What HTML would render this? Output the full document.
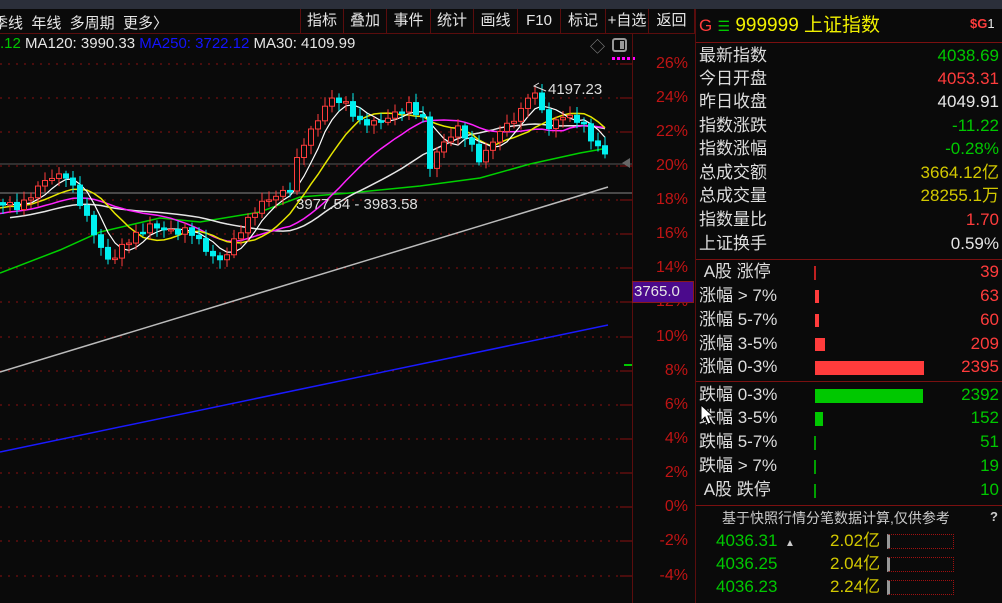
<!DOCTYPE html>
<html><head><meta charset="utf-8"><style>
*{margin:0;padding:0;box-sizing:border-box}
body{width:1002px;height:603px;background:#0a0a0a;overflow:hidden;position:relative;font-family:"Liberation Sans","Noto Sans CJK SC",sans-serif;color:#ddd}
.a{position:absolute;white-space:nowrap}
.tb{position:absolute;top:9px;height:25px;border-left:1px solid #5a0d0d;font-size:15px;color:#e6e6e6;text-align:center;line-height:24px}
.r{position:absolute;left:699px;width:300px;font-size:17px;height:23px;line-height:23px}
.r .l{position:absolute;left:0;color:#ddd}
.r .v{position:absolute;right:0}
.g{color:#00c800}.rd{color:#ff3c3c}.y{color:#d2c800}.w{color:#e6e6e6}
.pct{position:absolute;left:636px;width:52px;text-align:right;font-size:16px;color:#c01414}
.q{line-height:20px;height:20px;font-size:17px}
</style></head><body>
<div class="a" style="left:0;top:0;width:1002px;height:9px;background:#2b2f3a"></div>
<div class="a" style="left:0;top:33px;width:696px;height:1px;background:#5a0d0d"></div>
<div class="a" style="left:-7px;top:12px;font-size:15px;color:#e6e6e6">季线&nbsp;&nbsp;年线&nbsp;&nbsp;多周期&nbsp;&nbsp;更多〉</div>
<div class="tb" style="left:300px;width:43px">指标</div>
<div class="tb" style="left:343px;width:43px">叠加</div>
<div class="tb" style="left:386px;width:44px">事件</div>
<div class="tb" style="left:430px;width:43px">统计</div>
<div class="tb" style="left:473px;width:44px">画线</div>
<div class="tb" style="left:517px;width:43px">F10</div>
<div class="tb" style="left:560px;width:45px">标记</div>
<div class="tb" style="left:605px;width:43px">+自选</div>
<div class="tb" style="left:648px;width:47px;border-right:1px solid #5a0d0d">返回</div>
<div class="a" style="left:0;top:35px;font-size:15px;color:#e6e6e6"><span class="g">.12</span> MA120: 3990.33 <span style="color:#1414ff">MA250: 3722.12</span> MA30: 4109.99</div>
<div class="a" style="left:590px;top:36px;font-size:15px;color:#888">◇</div>
<div class="a" style="left:612px;top:38px;width:15px;height:14px;border:2px solid #999;border-radius:3px"><div style="position:absolute;right:1px;top:1px;width:4px;height:8px;background:#999"></div></div>
<div class="a" style="left:612px;top:57px;width:24px;height:3px;background:repeating-linear-gradient(90deg,#f0f 0 3px,transparent 3px 5px)"></div>
<div class="a" style="left:632px;top:34px;width:1px;height:569px;background:#5a0d0d"></div>
<div class="a" style="left:695px;top:9px;width:1px;height:594px;background:#5a0d0d"></div>
<div class="pct" style="top:55px">26%</div><div class="pct" style="top:89px">24%</div><div class="pct" style="top:123px">22%</div><div class="pct" style="top:157px">20%</div><div class="pct" style="top:191px">18%</div><div class="pct" style="top:225px">16%</div><div class="pct" style="top:259px">14%</div><div class="pct" style="top:293px">12%</div><div class="pct" style="top:328px">10%</div><div class="pct" style="top:362px">8%</div><div class="pct" style="top:396px">6%</div><div class="pct" style="top:430px">4%</div><div class="pct" style="top:464px">2%</div><div class="pct" style="top:498px">0%</div><div class="pct" style="top:532px">-2%</div><div class="pct" style="top:567px">-4%</div>
<div class="a" style="left:632px;top:281px;width:62px;height:22px;background:#4b0a8c;border:1px solid #8a1a1a;color:#e6e6e6;font-size:15px;line-height:20px;padding-left:1px">3765.0</div>
<svg class="a" style="left:0;top:34px" width="640" height="569" id="s"></svg>
<div class="a" style="left:548px;top:81px;font-size:15px;color:#ddd">4197.23</div>
<div class="a" style="left:296px;top:196px;font-size:15px;color:#ddd">3977.54 - 3983.58</div>
<div class="a" style="left:699px;top:10px;font-size:19px"><span class="rd" style="font-size:17px">G</span> <span class="g" style="font-size:14px">☰</span> <span style="color:#f0f000">999999 上证指数</span></div>
<div class="a" style="left:970px;top:16px;font-size:13px"><span class="rd" style="font-weight:bold">$G</span><span class="w">1</span></div>
<div class="a" style="left:696px;top:42px;width:306px;height:1px;background:#7a1010"></div>
<div class="r" style="top:44px"><span class="l">最新指数</span><span class="v g">4038.69</span></div>
<div class="r" style="top:67px"><span class="l">今日开盘</span><span class="v rd">4053.31</span></div>
<div class="r" style="top:90px"><span class="l">昨日收盘</span><span class="v w">4049.91</span></div>
<div class="r" style="top:114px"><span class="l">指数涨跌</span><span class="v g">-11.22</span></div>
<div class="r" style="top:137px"><span class="l">指数涨幅</span><span class="v g">-0.28%</span></div>
<div class="r" style="top:161px"><span class="l">总成交额</span><span class="v y">3664.12亿</span></div>
<div class="r" style="top:184px"><span class="l">总成交量</span><span class="v y">28255.1万</span></div>
<div class="r" style="top:208px"><span class="l">指数量比</span><span class="v rd">1.70</span></div>
<div class="r" style="top:232px"><span class="l">上证换手</span><span class="v w">0.59%</span></div>
<div class="a" style="left:696px;top:259px;width:306px;height:1px;background:#7a1010"></div>
<div class="r" style="top:260px"><span class="l">&nbsp;A股 涨停</span><span class="v rd">39</span></div>
<div class="r" style="top:284px"><span class="l">涨幅 &gt; 7%</span><span class="v rd">63</span></div>
<div class="r" style="top:308px"><span class="l">涨幅 5-7%</span><span class="v rd">60</span></div>
<div class="r" style="top:332px"><span class="l">涨幅 3-5%</span><span class="v rd">209</span></div>
<div class="r" style="top:355px"><span class="l">涨幅 0-3%</span><span class="v rd">2395</span></div>
<div class="a" style="left:814px;top:266px;width:2px;height:14px;background:#c02020"></div>
<div class="a" style="left:815px;top:290px;width:4px;height:13px;background:#ff3c3c"></div>
<div class="a" style="left:815px;top:314px;width:4px;height:13px;background:#ff3c3c"></div>
<div class="a" style="left:815px;top:338px;width:10px;height:13px;background:#ff3c3c"></div>
<div class="a" style="left:815px;top:361px;width:109px;height:14px;background:#ff3c3c"></div>
<div class="a" style="left:696px;top:381px;width:306px;height:1px;background:#7a1010"></div>
<div class="r" style="top:383px"><span class="l">跌幅 0-3%</span><span class="v g">2392</span></div>
<div class="r" style="top:406px"><span class="l">跌幅 3-5%</span><span class="v g">152</span></div>
<div class="r" style="top:430px"><span class="l">跌幅 5-7%</span><span class="v g">51</span></div>
<div class="r" style="top:454px"><span class="l">跌幅 &gt; 7%</span><span class="v g">19</span></div>
<div class="r" style="top:478px"><span class="l">&nbsp;A股 跌停</span><span class="v g">10</span></div>
<div class="a" style="left:815px;top:389px;width:108px;height:14px;background:#00c800"></div>
<div class="a" style="left:815px;top:412px;width:8px;height:14px;background:#00c800"></div>
<div class="a" style="left:814px;top:436px;width:2px;height:14px;background:#00a000"></div>
<div class="a" style="left:814px;top:460px;width:2px;height:14px;background:#00a000"></div>
<div class="a" style="left:814px;top:484px;width:2px;height:14px;background:#00a000"></div>
<div class="a" style="left:696px;top:505px;width:306px;height:1px;background:#7a1010"></div>
<div class="a" style="left:722px;top:508px;font-size:14px;color:#ccc">基于快照行情分笔数据计算,仅供参考</div>
<div class="a" style="left:990px;top:509px;font-size:13px;color:#ccc;font-weight:bold">?</div>
<div class="a g q" style="left:716px;top:531px">4036.31 <span style="color:#ccc;font-size:10px">&nbsp;▲</span></div>
<div class="a g q" style="left:716px;top:554px">4036.25</div>
<div class="a g q" style="left:716px;top:577px">4036.23</div>
<div class="a y q" style="left:830px;top:531px">2.02亿</div>
<div class="a y q" style="left:830px;top:554px">2.04亿</div>
<div class="a y q" style="left:830px;top:577px">2.24亿</div>
<div class="a" style="left:887px;top:534px;width:67px;height:15px;border:1px dotted #a01010;border-left:3px solid #999"></div>
<div class="a" style="left:887px;top:557px;width:67px;height:15px;border:1px dotted #a01010;border-left:3px solid #999"></div>
<div class="a" style="left:887px;top:580px;width:67px;height:15px;border:1px dotted #a01010;border-left:3px solid #999"></div>
<script>
var s=document.getElementById('s'),h='';
var oy=34;
[64,98,132,166,200,234,268,302,337,371,405,439,473,507,541,576].forEach(function(y){h+='<line x1="0" x2="632" y1="'+(y-oy)+'" y2="'+(y-oy)+'" stroke="#8a1010" stroke-dasharray="2,6"/>';h+='<line x1="620" x2="632" y1="'+(y-oy)+'" y2="'+(y-oy)+'" stroke="#8a1010"/>';});
h+='<line x1="0" x2="632" y1="'+(164-oy)+'" y2="'+(164-oy)+'" stroke="#555" stroke-width="1"/>';
h+='<line x1="0" x2="632" y1="'+(193-oy)+'" y2="'+(193-oy)+'" stroke="#888" stroke-width="1"/>';
h+='<polygon points="622,'+(163-oy)+' 630,'+(158-oy)+' 630,'+(168-oy)+'" fill="#666"/>';
h+='<line x1="624" x2="632" y1="'+(365-oy)+'" y2="'+(365-oy)+'" stroke="#00c800" stroke-width="2"/>';
var kp=[[-200,230],[-100,215],[0,200],[20,205],[45,178],[65,172],[75,190],[100,245],[110,262],[125,242],[150,225],[175,232],[190,230],[210,255],[222,262],[240,232],[260,205],[290,190],[300,150],[310,135],[330,100],[345,105],[360,125],[380,125],[410,108],[425,125],[430,170],[440,150],[460,130],[480,165],[500,135],[520,118],[530,95],[540,105],[548,135],[560,120],[580,125],[595,150],[607,160]];
function f(x){for(var i=0;i<kp.length-1;i++){if(x<=kp[i+1][0]){var t=(x-kp[i][0])/(kp[i+1][0]-kp[i][0]);return kp[i][1]+t*(kp[i+1][1]-kp[i][1]);}}return kp[kp.length-1][1];}
var dx=7,c=[],xs=[];
for(var x=-200;x<=607;x+=dx){xs.push(x);c.push(f(x)+6*Math.sin(x*0.9)+3*Math.sin(x*2.3));}
function ma(n,col,w){var p=[];for(var i=n;i<c.length;i++){var sm=0;for(var j=0;j<n;j++)sm+=c[i-j];if(xs[i]>=-5)p.push(xs[i]+','+(sm/n-oy).toFixed(1));}h+='<polyline points="'+p.join(' ')+'" fill="none" stroke="'+col+'" stroke-width="'+w+'"/>';}
h+='<line x1="0" y1="'+(452-oy)+'" x2="608" y2="'+(325-oy)+'" stroke="#1a1aff" stroke-width="1.5"/>';
h+='<line x1="0" y1="'+(372-oy)+'" x2="608" y2="'+(187-oy)+'" stroke="#bbb" stroke-width="1.5"/>';
h+='<polyline points="0,'+(273-oy)+' 60,'+(250-oy)+' 100,'+(232-oy)+' 160,'+(218-oy)+' 200,'+(222-oy)+' 260,'+(212-oy)+' 300,'+(197-oy)+' 350,'+(193-oy)+' 420,'+(186-oy)+' 480,'+(178-oy)+' 530,'+(164-oy)+' 580,'+(153-oy)+' 608,'+(148-oy)+'" fill="none" stroke="#00d000" stroke-width="1.5"/>';
ma(30,'#e6e6e6',1.5);ma(20,'#ff22ff',1.5);ma(10,'#e6e600',1.5);ma(5,'#ffffff',1.2);
for(var i=1;i<c.length;i++){var x=xs[i];if(x<0)continue;var o=c[i-1],cl=c[i];var tp=Math.min(o,cl)-3-Math.abs(Math.sin(x))*6,bt=Math.max(o,cl)+3+Math.abs(Math.cos(x))*6;
var up=cl<o;var col=up?'#ff3c3c':'#00f0f0';
h+='<line x1="'+x+'" x2="'+x+'" y1="'+(tp-oy)+'" y2="'+(bt-oy)+'" stroke="'+col+'"/>';
var hh=Math.max(1.5,Math.abs(cl-o));h+='<rect x="'+(x-2.5)+'" y="'+(Math.min(o,cl)-oy)+'" width="5" height="'+hh+'" fill="'+(up?'#0a0a0a':col)+'" stroke="'+col+'" stroke-width="1"/>';}
h+='<polyline points="546,'+(91-oy)+' 534,'+(86-oy)+' 539,'+(83-oy)+'" fill="none" stroke="#ddd"/>';
s.innerHTML=h;
</script>
<svg class="a" style="left:700px;top:404px" width="14" height="22"><path d="M1 1 L1 17 L5 13 L8 20 L11 19 L8 12 L13 12 Z" fill="#fff" stroke="#000"/></svg>
</body></html>
